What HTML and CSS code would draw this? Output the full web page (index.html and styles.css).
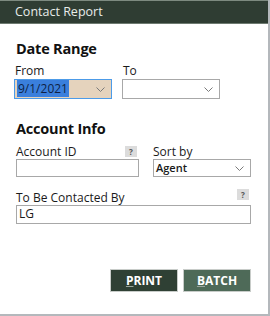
FILE: index.html
```html
<!DOCTYPE html>
<html lang="en">
<head>
    <meta charset="UTF-8">
    <title>Contact Report</title>
    <link rel="stylesheet" href="styles.css">
</head>
<body>
    <div class="window">
        <div class="titlebar">Contact Report</div>

        <div class="content">
            <h2 class="section-title">Date Range</h2>
            <div class="date-row">
                <div class="field">
                    <label class="field-label">From</label>
                    <div class="combo combo-focus">
                        <span class="combo-value"><span class="selected">9/1/2021</span></span>
                        <svg class="chevron" width="9" height="5" viewBox="0 0 9 5"><path d="M0.5 0.5 L4.5 4.5 L8.5 0.5" fill="none" stroke="#7a7a7a" stroke-width="1"/></svg>
                    </div>
                </div>
                <div class="field">
                    <label class="field-label">To</label>
                    <div class="combo">
                        <span class="combo-value"></span>
                        <svg class="chevron" width="9" height="5" viewBox="0 0 9 5"><path d="M0.5 0.5 L4.5 4.5 L8.5 0.5" fill="none" stroke="#7a7a7a" stroke-width="1"/></svg>
                    </div>
                </div>
            </div>

            <h2 class="section-title section-account">Account Info</h2>
            <div class="account-row">
                <div class="field">
                    <div class="label-row">
                        <label class="field-label">Account ID</label>
                        <span class="help">?</span>
                    </div>
                    <div class="textbox"></div>
                </div>
                <div class="field">
                    <div class="label-row">
                        <label class="field-label">Sort by</label>
                    </div>
                    <div class="combo combo-small">
                        <span class="combo-value combo-bold">Agent</span>
                        <svg class="chevron" width="9" height="5" viewBox="0 0 9 5"><path d="M0.5 0.5 L4.5 4.5 L8.5 0.5" fill="none" stroke="#7a7a7a" stroke-width="1"/></svg>
                    </div>
                </div>
            </div>

            <div class="field contacted">
                <div class="label-row">
                    <label class="field-label">To Be Contacted By</label>
                    <span class="help">?</span>
                </div>
                <div class="textbox textbox-wide">LG</div>
            </div>

            <div class="actions">
                <button class="btn btn-print"><u>P</u>RINT</button>
                <button class="btn btn-batch"><u>B</u>ATCH</button>
            </div>
        </div>
    </div>
</body>
</html>
```

FILE: styles.css
```css
* {
    margin: 0;
    padding: 0;
    box-sizing: border-box;
}

body {
    font-family: 'Open Sans', 'Noto Sans', sans-serif;
    background: #ffffff;
    color: #1a1a1a;
}

.window {
    width: 270px;
    height: 316px;
    background: #ffffff;
    border-right: 2px solid #b4b8bc;
    border-bottom: 2px solid #b4b8bc;
}

.titlebar {
    height: 24px;
    background: #2f3d33;
    border-top: 1px solid #7d8a80;
    border-bottom: 1px solid #6d7a70;
    color: #e8ece9;
    font-size: 12.5px;
    line-height: 21px;
    padding-left: 15px;
}

.content {
    padding: 0 17px 0 16px;
}

.section-title {
    font-size: 14.5px;
    font-weight: 700;
    color: #111;
    line-height: 18px;
    margin-top: 16px;
    letter-spacing: -0.2px;
}

.section-account {
    margin-top: 21px;
}

.field {
    display: flex;
    flex-direction: column;
}

.field-label {
    font-size: 12px;
    line-height: 15px;
    color: #1a1a1a;
}

.date-row {
    display: grid;
    grid-template-columns: 98px 98px;
    gap: 10px;
    margin-left: -2px;
    margin-top: 5px;
}

.date-row .field-label {
    padding-left: 1px;
}

.combo {
    height: 20px;
    margin-top: 1px;
    border: 1px solid #a8a8a8;
    background: #ffffff;
    display: flex;
    align-items: center;
    justify-content: space-between;
    padding: 0 6px 0 2px;
}

.combo-focus {
    border-color: #4c9be8;
    background: #e5d3bd;
}

.combo-value {
    font-size: 12px;
    line-height: 16px;
}

.selected {
    background: #3a7fdc;
    color: #0f1f44;
    padding: 0 1px;
}

.chevron {
    display: block;
}

.combo-small {
    height: 18px;
    margin-top: 0;
}

.combo-bold {
    font-size: 11px;
    font-weight: 600;
}

.account-row {
    display: grid;
    grid-template-columns: 123px 98px;
    gap: 14px;
    margin-top: 6px;
}

.label-row {
    display: flex;
    justify-content: space-between;
    align-items: center;
    height: 15px;
}

.help {
    width: 12px;
    height: 11px;
    background: #dcdcdc;
    color: #555;
    font-size: 8px;
    font-weight: 700;
    line-height: 11px;
    text-align: center;
    margin-right: 2px;
    margin-top: 0;
}

.textbox {
    height: 18px;
    border: 1px solid #a8a8a8;
    background: #ffffff;
    font-size: 12px;
    line-height: 16px;
    padding-left: 2px;
}

.contacted {
    margin-top: 13px;
}

.contacted .help {
    margin-top: -6px;
}

.textbox-wide {
    height: 19px;
}

.actions {
    display: flex;
    justify-content: flex-end;
    gap: 5px;
    margin-top: 45px;
}

.btn {
    width: 68px;
    height: 23px;
    border: 1px solid #c8ccc9;
    color: #ffffff;
    font-family: 'Open Sans', 'Noto Sans', sans-serif;
    font-size: 12px;
    font-weight: 700;
}

.btn u {
    text-decoration-color: #9aa59d;
}

.btn-print {
    background: #2f4034;
}

.btn-batch {
    background: #4e6a58;
}
```
